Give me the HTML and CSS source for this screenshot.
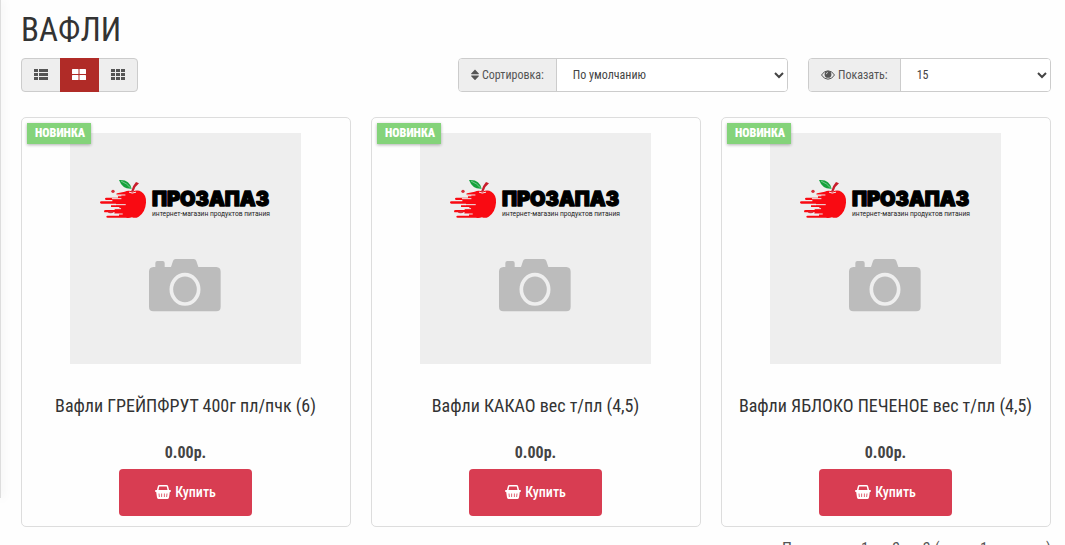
FILE: index.html
```html
<!DOCTYPE html>
<html lang="ru">
<head>
    <meta charset="UTF-8">
    <meta name="viewport" content="width=device-width, initial-scale=1.0">
    <title>Вафли</title>
    <link rel="stylesheet" href="styles.css">
</head>
<body>

    <!-- Иконки -->
    <svg class="sprite" aria-hidden="true">
        <symbol id="icon-list" viewBox="0 0 14 11">
            <path d="M0 0h4v3H0zM5 0h9v3H5zM0 4h4v3H0zM5 4h9v3H5zM0 8h4v3H0zM5 8h9v3H5z"/>
        </symbol>
        <symbol id="icon-large" viewBox="0 0 14 11">
            <rect width="6.5" height="5" rx=".6"/>
            <rect x="7.5" width="6.5" height="5" rx=".6"/>
            <rect y="6" width="6.5" height="5" rx=".6"/>
            <rect x="7.5" y="6" width="6.5" height="5" rx=".6"/>
        </symbol>
        <symbol id="icon-th" viewBox="0 0 14 11">
            <path d="M0 0h4v3H0zM5 0h4v3H5zM10 0h4v3h-4zM0 4h4v3H0zM5 4h4v3H5zM10 4h4v3h-4zM0 8h4v3H0zM5 8h4v3H5zM10 8h4v3h-4z"/>
        </symbol>
        <symbol id="icon-sort" viewBox="0 0 8 12">
            <path d="M4 .4 7.8 4.4q.4.8-.4.8H.6q-.8 0-.4-.8zM4 11.200 7.800 7.200q.4-.8-.4-.8H.6q-.8 0-.4.8z"/>
        </symbol>
        <symbol id="icon-eye" viewBox="0 0 14 10">
            <path d="M.5 5Q3 .8 7 .8T13.500 5Q11 9.200 7 9.200T.5 5z" fill="none" stroke="currentColor"/>
            <circle cx="7" cy="4.400" r="3.400"/>
            <path d="M5.300 4.200A1.700 1.700 0 0 1 7 2.500" fill="none" stroke="#eee" stroke-width=".7"/>
        </symbol>
        <symbol id="icon-basket" viewBox="0 0 16 14">
            <path d="M2.500 6 3.500 1.600Q3.700.8 4.500.8h7q.8 0 1 .8L13.500 6" fill="none" stroke="currentColor" stroke-width="1.500"/>
            <path fill-rule="evenodd" d="M1 5h14q1 0 1 1t-1 1h-.2l-.8 5.600Q13.800 14 12.600 14H3.400Q2.200 14 2 12.600L1.200 7H1Q0 7 0 6t1-1zM3.600 8.500l.3 3.500h.8l-.3-3.500zM6.300 8.500V12h.8V8.500zM8.900 8.500V12h.8V8.500zM11.600 8.500l-.3 3.500h.8l.3-3.500z"/>
        </symbol>
        <symbol id="no-photo" viewBox="0 0 231 231">
            <rect width="231" height="231" fill="#eee"/>
            <g transform="translate(20 37) scale(.3333)">
                <path fill="#f90a12" d="M104 65q12-6 24 0 14-7 26 0 16 10 14 33-2 29-22 42-10 6-20 2-10 3-18 1H53q-4 0-4-3t4-3h34v-5H74v-5H47q-5 0-5-3.500t5-3.500h27v-4h14v-5H63v-5h15v-5H34q-4 0-4-3.500t4-3.500h33v-4H49q-4 0-4-3.500t4-3.500h35v-4h10v-3h-12q-3 0-3-3t3-3z"/>
                <path fill="none" stroke="#eee" stroke-width="3" stroke-linecap="round" d="M76 75h29M67 86h26M78 104h28M72 116h20M76 132h21"/>
                <circle cx="69" cy="64" r="5" fill="#d8303b"/>
                <ellipse cx="62" cy="127" rx="8" ry="3" fill="#d8303b"/>
                <path fill="none" stroke="#eee" stroke-width="3" stroke-linecap="round" d="M118 67q8 5 19 0"/>
                <path fill="#c91c2b" d="M123 65q4-17 15-29l9 4q-12 9-17 25z"/>
                <path fill="#15a23c" d="M87 30q31-3 38 26-28 2-38-26z"/>
                <path fill="none" stroke="#d5efdc" stroke-width="1.500" d="M93 33q18 7 29 21"/>
                <text class="logo-name" x="186" y="109">ПРОЗАПАЗ</text>
                <text class="logo-note" x="186" y="139">интернет-магазин продуктов питания</text>
            </g>
            <g transform="translate(60 112) scale(.3333)">
                <path fill="#bcbcbc" d="M57 80q0-13 13-14h6V54q0-6 6-6h16q6 0 6 6v12h19l6-18q2-6 8-6h54q6 0 8 6l6 18h54q13 1 13 14v105q0 14-13 14H70q-13 0-13-14z"/>
                <ellipse cx="165" cy="133" rx="41" ry="44" fill="none" stroke="#eee" stroke-width="11"/>
            </g>
        </symbol>
    </svg>

    <div class="page">
        <aside class="sidebar"></aside>

        <main class="content">
            <h1>ВАФЛИ</h1>

            <!-- Панель управления списком -->
            <div class="toolbar">
                <div class="btn-group">
                    <button type="button" aria-label="Список"><svg class="icon-view"><use href="#icon-list"/></svg></button>
                    <button type="button" class="active" aria-label="Сетка"><svg class="icon-view"><use href="#icon-large"/></svg></button>
                    <button type="button" aria-label="Мелкая сетка"><svg class="icon-view"><use href="#icon-th"/></svg></button>
                </div>
                <div class="input-group sort">
                    <label for="input-sort"><svg class="icon-sort"><use href="#icon-sort"/></svg> Сортировка:</label>
                    <select id="input-sort">
                        <option>По умолчанию</option>
                    </select>
                </div>
                <div class="input-group limit">
                    <label for="input-limit"><svg class="icon-eye"><use href="#icon-eye"/></svg> Показать:</label>
                    <select id="input-limit">
                        <option>15</option>
                    </select>
                </div>
            </div>

            <!-- Товары -->
            <div class="products">
                <div class="product">
                    <span class="sticker">НОВИНКА</span>
                    <svg class="photo"><use href="#no-photo"/></svg>
                    <h4><a href="#">Вафли ГРЕЙПФРУТ 400г пл/пчк (6)</a></h4>
                    <p class="price">0.00р.</p>
                    <button type="button" class="buy"><svg class="icon-basket"><use href="#icon-basket"/></svg> Купить</button>
                </div>
                <div class="product">
                    <span class="sticker">НОВИНКА</span>
                    <svg class="photo"><use href="#no-photo"/></svg>
                    <h4><a href="#">Вафли КАКАО вес т/пл (4,5)</a></h4>
                    <p class="price">0.00р.</p>
                    <button type="button" class="buy"><svg class="icon-basket"><use href="#icon-basket"/></svg> Купить</button>
                </div>
                <div class="product">
                    <span class="sticker">НОВИНКА</span>
                    <svg class="photo"><use href="#no-photo"/></svg>
                    <h4><a href="#">Вафли ЯБЛОКО ПЕЧЕНОЕ вес т/пл (4,5)</a></h4>
                    <p class="price">0.00р.</p>
                    <button type="button" class="buy"><svg class="icon-basket"><use href="#icon-basket"/></svg> Купить</button>
                </div>
            </div>

            <p class="results">Показано с 1 по 3 из 3 (всего 1 страниц)</p>
        </main>
    </div>

</body>
</html>
```
FILE: styles.css
```css
* {
    box-sizing: border-box;
}

body {
    margin: 0;
    background: #fefefe;
    color: #444;
    font-family: "Roboto Condensed", "Liberation Sans Narrow", Roboto, sans-serif;
    font-size: 16px;
    line-height: 20px;
}

.sprite {
    display: block;
    width: 0;
    height: 0;
}

svg {
    fill: currentColor;
}

.page {
    display: flex;
    align-items: flex-start;
}

.sidebar {
    flex: none;
    width: 1px;
    height: 498px;
    background: #ddd;
    box-shadow: 0 0 10px rgba(0, 0, 0, 0.25);
}

.content {
    flex: 1;
    padding: 10px 14px 10px 20px;
}

h1 {
    margin: 0 0 8px;
    color: #333;
    font-size: 33px;
    font-weight: 400;
    line-height: 40px;
}

/* Панель */
.toolbar {
    display: flex;
    gap: 20px;
    margin-bottom: 25px;
}

.btn-group {
    display: flex;
    width: 117px;
    height: 34px;
    margin-right: auto;
    border: 1px solid #ccc;
    border-radius: 4px;
    background: #eee;
}

.btn-group button {
    display: flex;
    flex: 1;
    align-items: center;
    justify-content: center;
    padding: 0 0 2px;
    border: 0;
    background: none;
    color: #555;
    cursor: pointer;
}

.btn-group .active {
    margin: -1px 0;
    background: #b02b27;
    color: #fff;
}

.icon-view {
    width: 14px;
    height: 11px;
}

.input-group {
    display: flex;
    height: 34px;
    border: 1px solid #ccc;
    border-radius: 4px;
    background: #fff;
    font-size: 12px;
    overflow: hidden;
}

.sort {
    width: 330px;
}

.limit {
    width: 243px;
}

.input-group label {
    display: flex;
    align-items: center;
    gap: 3px;
    padding: 0 12px;
    border-right: 1px solid #ccc;
    background: #eee;
    color: #555;
    white-space: nowrap;
}

.input-group select {
    flex: 1;
    min-width: 0;
    padding: 0 0 0 12px;
    border: 0;
    background: #fff;
    color: #444;
    font-family: inherit;
    font-size: 12px;
}

.icon-sort {
    width: 8px;
    height: 12px;
}

.icon-eye {
    width: 14px;
    height: 10px;
}

/* Товары */
.products {
    display: grid;
    grid-template-columns: repeat(3, 1fr);
    gap: 20px;
}

.product {
    position: relative;
    display: flex;
    flex-direction: column;
    align-items: center;
    padding: 15px 16px 10px 15px;
    border: 1px solid #ddd;
    border-radius: 5px;
}

.sticker {
    position: absolute;
    top: 5px;
    left: 5px;
    padding: 0 6px 0 8px;
    background: #84d37a;
    box-shadow: 0 1px 3px rgba(0, 0, 0, 0.3);
    color: #fff;
    font-size: 12px;
    font-weight: 900;
    line-height: 21px;
}

.photo {
    width: 231px;
    height: 231px;
}

.logo-name {
    fill: #000;
    stroke: #000;
    stroke-width: 4px;
    stroke-linejoin: round;
    font-family: Inter, sans-serif;
    font-size: 60px;
    font-weight: 900;
}

.logo-note {
    fill: #222;
    font-family: Roboto, sans-serif;
    font-size: 20px;
}

.product h4 {
    margin: 32px 0 27px;
    font-size: 18px;
    font-weight: 400;
    line-height: 20px;
    text-align: center;
}

.product a {
    color: #333;
    text-decoration: none;
}

.price {
    margin: 0 0 6px;
    font-size: 16px;
    font-weight: 700;
}

.buy {
    display: flex;
    align-items: center;
    justify-content: center;
    gap: 4px;
    width: 133px;
    height: 47px;
    padding: 0 0 2px;
    border: 0;
    border-radius: 4px;
    background: #d83d52;
    color: #fff;
    font-family: inherit;
    font-size: 14px;
    font-weight: 500;
    cursor: pointer;
}

.icon-basket {
    width: 16px;
    height: 14px;
}

.results {
    margin: 12px 0 0;
    color: #555;
    text-align: right;
}
```
